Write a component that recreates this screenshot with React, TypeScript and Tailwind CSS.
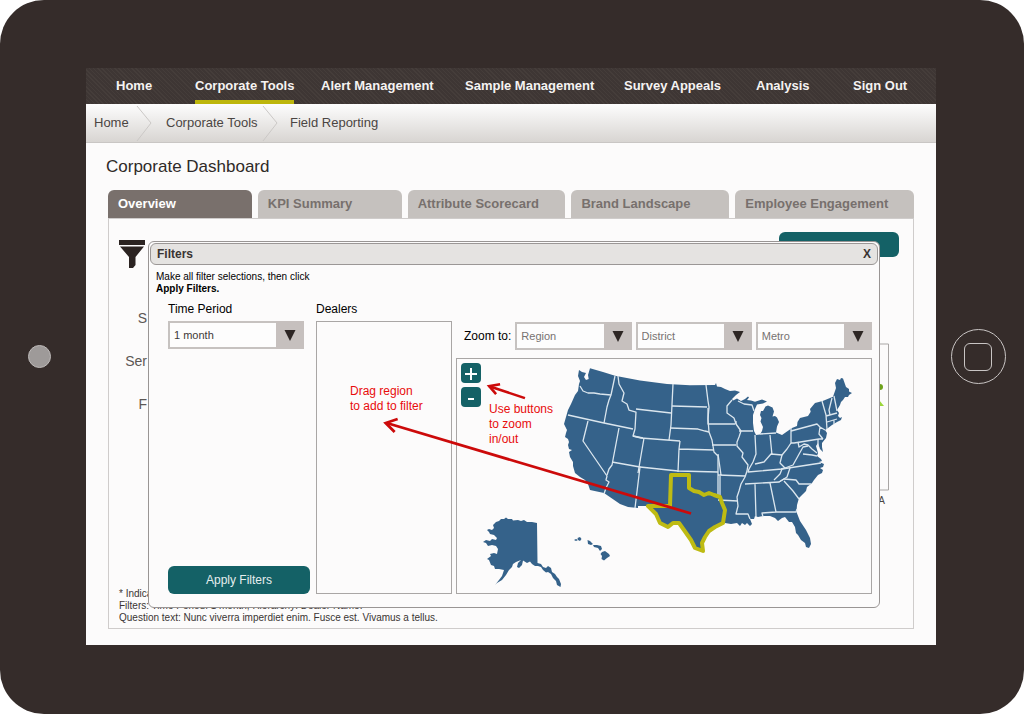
import React from "react";

const NAV = ["Home", "Corporate Tools", "Alert Management", "Sample Management", "Survey Appeals", "Analysis", "Sign Out"];
const TABS = ["Overview", "KPI Summary", "Attribute Scorecard", "Brand Landscape", "Employee Engagement"];

const COAST =
  "M579 370L582 372L586 373L584 377L586 380L588.7 379L588 375L590 368.3L603 372L615 375.7L640 380.5L667 384L690 385.3L715 385L716 383L717 386.5L721 387L725 389L730 391L735 390.5L740 392L736 395L732 399L733 400.5L737 398.5L741 401L745 399L748 396.5L749 397.5L747 400L751 400.5L755 401.7L762 399.5L767 401.5L763 403.5L757 404.5L755 409L753 415L753 423L754 431L756 435L760 434.5L762 431L763 427L760.5 421.5L761.5 418L760 415L761 411L763 411L765.5 406.5L768 405.5L772.5 407.5L774 411.5L772.5 416.5L775 416L777 417.5L779 422L777 426.5L776 432.5L782 435L787 431.5L792 428L797 426L797.5 422L800 418L808 416L810.7 411.7L810 409L815 403L822.7 401L833 396.7L835 391L836 388L835 383L837 379L840 380L841 378L843 378.5L846 387L849 389L849 391.5L852 393L849 395L848 397L845 397L843 400L841 402L840 405L837 410L839 413L838 416L840 418L842 417L841 420L837 422L832 425L828 428L825 430L827 433L826 438L822 443L822 447L823 452L820 449L818 443L816 446L818 453L817 456L821 459L822 461L819 462L824 464L823 467L820 468L823 470L822 473L818 475L814 480L812 483L807 487L806 491L803 494L799 498L797 505L796.5 512L800 521L802 524L806 530L810 538L811 544L809 548L806 547L805 543L801 540L798 535L796 533L795 527L792 522L789 522L785 517L782 518L778 521L775 518L770 516L763 516L758 517L755 516L754 519L750 519L752 524L750 526L747 523L745 525L742 523L740 526L737 523L731 524L725 523L715 528L706 536L703 545L703 552L695 549L691 541L683 530L678 523L673 523L668 528L660 523L656 515L647 506L638 506L638 508L628 507L620 504L604 493L590 490L588 484L585 480L580 477L575 473L573 466L573 462L570 457L569 452L572 450L569 449L568 445L569 442L568 439L565 437L566 433L567 430L564 424L566 417L568 410L571 404L575 395L578 391L579 384L580 381L578 376Z";

const STATES = [
  "M580 386L583 391L588 393L594 393L600 394L611 395",
  "M615 376L611 395L609 400L607 407L604 423",
  "M568 415L604 423L633 429",
  "M618 376L619 384L624 393L622 401L627 404L629 410L636 412L635 429L633 436L641 438L680 441",
  "M636 409L671 413M673 384L671 425L669 440",
  "M672 406L707 407M670 428L698 429L705 431L709 432",
  "M706 385L708 401L709 407L708 419L709 432L712 440L714 452L718 456L718 496",
  "M708 408L708 424L735 424M712 445L736 445M680 441L679 449L714 450M679 449L678 472",
  "M588 421L583 441L607 476L606 480L609 482L606 488L604 494",
  "M619 428L612 465L609 469L607 475M612 462L640 467L635 508",
  "M644 438L638 473M633 436L643 438M640 467L678 471L718 472",
  "M718 475L745 476M721 475L718 454M718 500L738 501M720 475L720 496",
  "M732 400L727 406L727 413L734 418L736 424L741 431L739 437L737 442L737 446L743 453L742 457L748 465L747 471L745 477L741 484L739 491L737 497L738 506L736 514L748 514L750 519",
  "M739 431L753 431M738 401L744 404L752 405L754 411M736 424L736 421",
  "M755 435L756 454L753 462L749 469L748 472L782 469L821 463",
  "M770 435L772 455M760 434L776 433M755 464L764 462L771 454L782 455L787 449L791 443L791 428",
  "M745 484L779 482L787 477L790 468M755 484L756 517M770 483L776 512L762 513L763 517M776 512L796 512L797 509",
  "M779 482L784 479L796 480L799 484L811 484M784 481L793 491L799 499",
  "M782 455L780 463L785 468L793 465L798 456L803 447L808 446",
  "M791 443L794 443L819 439L823 439M791 431L817 424L820 427L825 430M820 427L819 434L823 439",
  "M798 442L799 447L804 444L808 445L812 449L817 453M818 439L818 447",
  "M822 401L826 415L827 429M832 398L829 410L830 415M834 396L837 411M826 416L837 413M827 422L837 419M834 420L834 424",
  "M782 469L780 474L774 480M785 468L781 469M803 454L812 455L817 456",
];

const TEXAS =
  "M648 506L670 506L671 475L689 475L689 488L694 491L699 492L704 495L709 493L714 495L720 497L722 503L725 510L723 523L715 527L709 531L705 537L702 543L703 551L695 548L691 540L684 530L679 523L673 523L668 527L660 523L656 514Z";

const ALASKA =
  "M487 530L489 529L492 530L494 528L493 525L496 522L499 521L501 519L504 519L506 517.5L508 519L512 519L513 520.5L518 520L521 521L524 520L527 522L532 522L537 523L537.5 563L541 564L543 567L546 568L548 566L551 568L552 572L555 574L557 577L559 579L561 584L560.5 587L557 585L556 581L553 578L551 574L548 572L546 572.5L543 570L541 567L538 566L535 566L532 564L530 561.5L527 563L523 560.5L522 565L519 568L517 567L518 563L521 560L516 562L513 564L512 567L509 570L506 575L502 580L497 583L495 585L499 580L502 576L504 570L499 569L495 569L494 566L491 565L489 560L487 559L491 556L490 554L494 553L497 554L498 549L496 546L492 545L488 546L486 543L483 542L486 540L490 541L492 539L496 540L497 538L494 535L490 534L489 532Z";

const HAWAII =
  "M574 540L576 539L578 540L576 541ZM577.5 538L580 537L581.5 539L580 541L578 540ZM587.5 540L590 541L593 544L591 545L588 544ZM593 545L597 545L601 546L602 549L600 551L598 548L594 547ZM602 552L605 551L609 554L610 556L607 558L604 560.5L601.5 559L602 556L600.5 554Z";

function SelectBox({ id, label, option, color }: { id?: string; label?: string; option: string; color: string }) {
  return (
    <div className="relative">
      <select
        id={id}
        aria-label={label}
        className={`block h-7 w-full appearance-none border-2 border-[#c6c2c0] bg-[#fdfdfd] pl-1 text-[11px] leading-4 ${color}`}
      >
        <option>{option}</option>
      </select>
      <span className="pointer-events-none absolute inset-y-0 right-0 flex w-7 items-center justify-center bg-[#c6c0be]">
        <svg viewBox="0 0 12 11" className="h-[11px] w-3" aria-hidden="true">
          <path d="M0.5 0H11.5L6 11Z" fill="#2d2624" />
        </svg>
      </span>
    </div>
  );
}

function Chevron() {
  return (
    <svg viewBox="0 0 16 36" className="h-9 w-4" fill="none" stroke="#cbc8c6" aria-hidden="true">
      <path d="M1 1L15 18L1 36" />
    </svg>
  );
}

function UsMap() {
  return (
    <svg viewBox="457 359 414 234" className="block h-full w-full" role="img" aria-label="Map of the United States">
      <g fill="#35628a">
        <path d={COAST} />
        <path d={ALASKA} />
        <path d={HAWAII} />
      </g>
      <g fill="none" stroke="#dbe6ee" strokeWidth="1.3" strokeLinejoin="round">
        {STATES.map((d) => (
          <path key={d} d={d} />
        ))}
      </g>
      <path d={TEXAS} fill="none" stroke="#bebb13" strokeWidth="4" strokeLinejoin="round" />
    </svg>
  );
}

function FiltersDialog() {
  return (
    <section
      role="dialog"
      aria-label="Filters"
      className="absolute top-[22px] right-[33px] bottom-5 left-[39px] flex flex-col rounded-md border border-[#999594] bg-[#fcfbfb] p-px"
    >
      <header className="flex h-[22px] items-center justify-between rounded-md border border-[#9b9796] bg-[#e5e3e1] px-1.5 text-[12px] font-bold text-[#3a3432]">
        <h2>Filters</h2>
        <button type="button" aria-label="Close" className="h-5">
          X
        </button>
      </header>
      <div className="grid flex-1 grid-cols-[156fr_136fr_416fr] gap-1 pt-1.5 pr-1.5 pb-3 pl-1.5">
        <div className="flex flex-col">
          <p className="text-[10px] leading-3 whitespace-nowrap text-black">
            Make all filter selections, then click
            <br />
            <b>Apply Filters.</b>
          </p>
          <div className="mt-1.5 pr-2 pl-3">
            <label htmlFor="time-period" className="mb-1 block text-[12px] leading-4 text-black">
              Time Period
            </label>
            <SelectBox id="time-period" option="1 month" color="text-[#3d3937]" />
          </div>
          <button type="button" className="mt-auto mr-0.5 ml-3 h-7 rounded-md bg-[#146166] text-[12px] text-[#e6eeee]">
            Apply Filters
          </button>
        </div>
        <div className="flex flex-col pt-[30px]">
          <h3 className="mb-1 text-[12px] leading-4 text-black">Dealers</h3>
          <div className="flex-1 border border-[#a9a6a5] pt-[62px] pl-[33px]">
            <p className="text-[12px] leading-[15px] whitespace-nowrap text-[#e80c0c]">
              Drag region
              <br />
              to add to filter
            </p>
          </div>
        </div>
        <div className="flex flex-col pt-[51px]">
          <div className="mb-2 grid grid-cols-[47fr_116fr_116fr_116fr] items-center gap-1 pl-2">
            <span className="text-[12px] whitespace-nowrap text-black">Zoom to:</span>
            <SelectBox label="Region" option="Region" color="text-[#777271]" />
            <SelectBox label="District" option="District" color="text-[#777271]" />
            <SelectBox label="Metro" option="Metro" color="text-[#777271]" />
          </div>
          <div className="relative min-h-0 flex-1 border border-[#a9a6a5]">
            <UsMap />
            <div className="absolute top-1 left-1 flex flex-col gap-1 text-white">
              <button type="button" aria-label="Zoom in" className="flex size-5 items-center justify-center rounded bg-[#146166]">
                <svg viewBox="0 0 20 20" className="size-5" stroke="currentColor" strokeWidth="2">
                  <path d="M4 11H16M10 5V17" />
                </svg>
              </button>
              <button type="button" aria-label="Zoom out" className="flex size-5 items-center justify-center rounded bg-[#146166]">
                <svg viewBox="0 0 20 20" className="size-5" stroke="currentColor" strokeWidth="2">
                  <path d="M7 12H13" />
                </svg>
              </button>
            </div>
            <p className="absolute top-[43px] left-8 text-[12px] leading-[15px] text-[#e80c0c]">
              Use buttons
              <br />
              to zoom
              <br />
              in/out
            </p>
          </div>
        </div>
      </div>
      <svg viewBox="148 241 732 367" className="pointer-events-none absolute inset-0 h-full w-full" fill="none" stroke="#cc0a0a" aria-hidden="true">
        <path d="M692 514L386 423" strokeWidth="2.8" />
        <path d="M397 419L385 423L394 432" strokeWidth="2.8" />
        <path d="M525 398L489 386" strokeWidth="2.6" />
        <path d="M500 384L489 386L496 394" strokeWidth="2.6" />
      </svg>
    </section>
  );
}

export default function App() {
  return (
    <div className="min-h-screen bg-white font-['Liberation_Sans',Arial,sans-serif]">
      <div className="grid min-h-screen grid-cols-[86px_1fr_88px] rounded-[44px] bg-[#352c2a] pt-[68px] pb-[69px]">
        <div className="flex items-center justify-center">
          <span className="mr-2 size-[23px] rounded-full border border-[#bdb9b8] bg-[#9e9a99]" />
        </div>
        <main className="flex flex-col bg-[#fcfbfb]">
          <nav className="grid h-9 grid-cols-[79fr_126fr_144fr_159fr_132fr_97fr_83fr] bg-[repeating-linear-gradient(45deg,#453d3a_0px,#453d3a_1px,#3e3634_1px,#3e3634_3px)] pl-[30px] text-[13px] font-bold text-[#f5f3f2]">
            {NAV.map((item) => (
              <a
                key={item}
                href="#"
                className={`flex items-center justify-self-start border-y-4 border-t-transparent whitespace-nowrap ${item === "Corporate Tools" ? "border-b-[#bdb60c]" : "border-b-transparent"}`}
              >
                {item}
              </a>
            ))}
          </nav>
          <nav
            aria-label="Breadcrumb"
            className="flex h-[39px] items-center border-b border-[#c9c6c4] bg-linear-to-b from-[#fdfdfd] to-[#d8d5d2] pl-2 text-[13px] whitespace-nowrap text-[#4a4543]"
          >
            <a href="#" className="w-[42px]">
              Home
            </a>
            <Chevron />
            <a href="#" className="ml-3.5 w-24">
              Corporate Tools
            </a>
            <Chevron />
            <a href="#" className="ml-3">
              Field Reporting
            </a>
          </nav>
          <div className="flex flex-1 flex-col px-[22px] pb-4">
            <h1 className="-ml-0.5 pt-3 pb-[11px] text-[17px] leading-6 text-[#2f2a28]">Corporate Dashboard</h1>
            <div role="tablist" className="grid grid-cols-[144fr_144fr_158fr_158fr_179fr] gap-1.5">
              {TABS.map((tab, i) => (
                <button
                  key={tab}
                  role="tab"
                  aria-selected={i === 0}
                  type="button"
                  className={`h-7 rounded-t-md px-2.5 text-left text-[13px] font-bold whitespace-nowrap ${i === 0 ? "bg-[#79706c] text-white" : "bg-[#c5c1be] text-[#77706d]"}`}
                >
                  {tab}
                </button>
              ))}
            </div>
            <div className="relative flex flex-1 flex-col border border-[#cfcccb] px-2.5 pt-[13px] pb-1">
              <div className="flex items-start justify-between pr-1">
                <svg viewBox="0 0 26 28" className="mt-2 h-7 w-[26px]" fill="#2b2321" aria-hidden="true">
                  <path d="M0 0H26V5H0ZM1 6.5H25L16.5 17V25L14 28H10V17Z" />
                </svg>
                <button type="button" aria-label="Open filters" className="h-[25px] w-[120px] rounded-md bg-[#146166]" />
              </div>
              <div className="flex flex-1 justify-between pr-3.5">
                <ul className="mt-[38px] flex w-7 flex-col gap-[19px] text-right text-[14px] leading-6 text-[#5c5755]">
                  <li>S</li>
                  <li>Ser</li>
                  <li>F</li>
                </ul>
                <div className="mt-[75px] w-8 text-right">
                  <svg viewBox="0 0 32 148" className="h-[148px] w-8" fill="none" aria-hidden="true">
                    <path d="M0 1H31.5V147H0" stroke="#a9a6a5" />
                    <circle cx="23" cy="44" r="3" fill="#6ea21c" />
                    <path d="M22 57L27 63H18Z" fill="#9bd63a" />
                  </svg>
                  <span className="mt-1 block pr-1 text-[10px] leading-3 text-[#4a4543]">A</span>
                </div>
              </div>
              <div className="text-[10px] leading-3 text-[#3a3533]">
                <p>* Indica</p>
                <p>Filters: Time Period: 1 month, Hierarchy: Dealer Name.</p>
                <p>Question text: Nunc viverra imperdiet enim. Fusce est. Vivamus a tellus.</p>
              </div>
              <FiltersDialog />
            </div>
          </div>
        </main>
        <div className="flex items-center justify-center">
          <button type="button" aria-label="Home button" className="mr-1 flex size-[55px] items-center justify-center rounded-full border border-[#c9c5c4]">
            <span className="size-7 rounded-md border border-[#c9c5c4]" />
          </button>
        </div>
      </div>
    </div>
  );
}
